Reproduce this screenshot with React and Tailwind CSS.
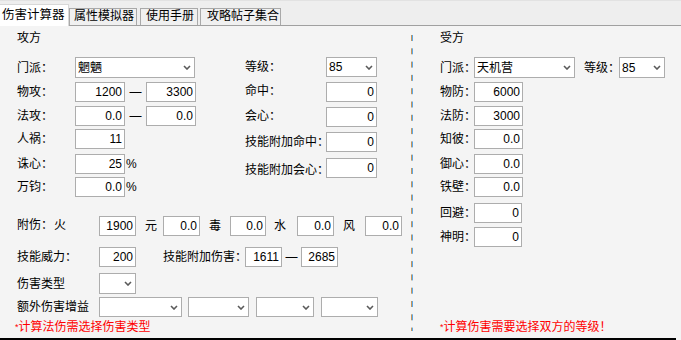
import React from "react"

const Chevron = () => (
  <svg width="8" height="5" viewBox="0 0 8 5" className="shrink-0">
    <path d="M1 1 L4 4 L7 1" fill="none" stroke="#5a5a5a" strokeWidth="1.6" />
  </svg>
)

function Box({ w, value = "", className = "" }) {
  return (
    <div
      className={`h-[20px] shrink-0 bg-white border border-[#adadad] flex items-center justify-end pr-[2px] leading-none ${w} ${className}`}
    >
      {value}
    </div>
  )
}

function Pick({ w, value = "", h = "h-[21px]", className = "" }) {
  return (
    <div
      className={`${h} shrink-0 bg-white border border-[#adadad] flex items-center pl-[2px] pr-[3px] leading-none ${w} ${className}`}
    >
      <span className="whitespace-nowrap">{value}</span>
      <span className="ml-auto">
        <Chevron />
      </span>
    </div>
  )
}

function Label({ w, children, className = "" }) {
  return <span className={`${w} shrink-0 whitespace-nowrap leading-none ${className}`}>{children}</span>
}

function Row({ className = "", children }) {
  return <div className={`flex items-center ${className}`}>{children}</div>
}

export default function App() {
  return (
    <div className="w-[681px] h-[340px] flex flex-col bg-[#f4f4f4] text-black text-[12px] font-['Liberation_Sans','Noto_Sans_CJK_SC',sans-serif] overflow-hidden">
      {/* tab strip */}
      <div className="h-[26px] shrink-0 bg-[#eeeeee] border-t border-t-[#e2e2e2] border-b border-[#a0a0a0] flex items-end">
        <div className="relative z-10 -mb-px h-[22px] w-[69px] bg-white border-r border-t border-[#d8d8d8] pl-[2px] pt-[3px] leading-[14px] text-[12.5px] whitespace-nowrap">
          伤害计算器
        </div>
        <div className="h-[17px] w-[68px] bg-[#f0f0f0] border-t border-l border-r border-[#a9a9a9] pl-[4px] leading-[15px] whitespace-nowrap">
          属性模拟器
        </div>
        <div className="ml-[3px] h-[17px] w-[58px] bg-[#f0f0f0] border-t border-l border-r border-[#a9a9a9] pl-[5px] leading-[15px] whitespace-nowrap">
          使用手册
        </div>
        <div className="ml-[2px] h-[17px] w-[81px] bg-[#f0f0f0] border-t border-l border-r border-[#a9a9a9] pl-[6px] leading-[15px] whitespace-nowrap">
          攻略帖子集合
        </div>
      </div>

      <div className="flex h-[312px]">
        {/* 攻方 */}
        <div className="w-[411px] shrink-0 pl-[17px] flex flex-col">
          <div className="mt-[5px] h-[14px] leading-[14px]">攻方</div>
          <div className="mt-[12px] flex">
            <div className="w-[228px] shrink-0 flex flex-col">
              <Row>
                <Label w="w-[58px]">门派：</Label>
                <Pick w="w-[120px]" value="魍魉" />
              </Row>
              <Row className="mt-[4px]">
                <Label w="w-[58px]">物攻：</Label>
                <Box w="w-[50px]" value="1200" />
                <span className="w-[21px] text-center">—</span>
                <Box w="w-[50px]" value="3300" />
              </Row>
              <Row className="mt-[4px]">
                <Label w="w-[58px]">法攻：</Label>
                <Box w="w-[50px]" value="0.0" />
                <span className="w-[21px] text-center">—</span>
                <Box w="w-[50px]" value="0.0" />
              </Row>
              <Row className="mt-[3px]">
                <Label w="w-[58px]">人祸：</Label>
                <Box w="w-[50px]" value="11" />
              </Row>
              <Row className="mt-[5px]">
                <Label w="w-[58px]">诛心：</Label>
                <Box w="w-[50px]" value="25" />
                <span className="pl-[1px]">%</span>
              </Row>
              <Row className="mt-[3px]">
                <Label w="w-[58px]">万钧：</Label>
                <Box w="w-[50px]" value="0.0" />
                <span className="pl-[1px]">%</span>
              </Row>
            </div>
            <div className="flex flex-col">
              <Row>
                <Label w="w-[81px]">等级：</Label>
                <Pick w="w-[51px]" h="h-[20px]" value="85" />
              </Row>
              <Row className="mt-[5px]">
                <Label w="w-[81px]" className="-mt-[3px]">命中：</Label>
                <Box w="w-[51px]" value="0" />
              </Row>
              <Row className="mt-[5px]">
                <Label w="w-[81px]" className="-mt-[3px]">会心：</Label>
                <Box w="w-[51px]" value="0" />
              </Row>
              <Row className="mt-[5px]">
                <Label w="w-[81px]">技能附加命中：</Label>
                <Box w="w-[51px]" value="0" />
              </Row>
              <Row className="mt-[6px]">
                <Label w="w-[81px]" className="mt-[4px]">技能附加会心：</Label>
                <Box w="w-[51px]" value="0" />
              </Row>
            </div>
          </div>

          <Row className="mt-[19px]">
            <span className="w-[82px] shrink-0 whitespace-nowrap leading-none -mt-[3px]">
              附伤：<span className="pl-[1px]">火</span>
            </span>
            <Box w="w-[37px]" value="1900" />
            <span className="w-[27px] shrink-0 pl-[9px]">元</span>
            <Box w="w-[37px]" value="0.0" />
            <span className="w-[30px] shrink-0 pl-[9px]">毒</span>
            <Box w="w-[36px]" value="0.0" />
            <span className="w-[31px] shrink-0 pl-[8px]">水</span>
            <Box w="w-[37px]" value="0.0" />
            <span className="w-[31px] shrink-0 pl-[9px]">风</span>
            <Box w="w-[37px]" value="0.0" />
          </Row>
          <Row className="mt-[11px]">
            <Label w="w-[82px]">技能威力：</Label>
            <Box w="w-[37px]" value="200" />
            <span className="w-[27px] shrink-0" />
            <Label w="w-[82px]">技能附加伤害：</Label>
            <Box w="w-[37px]" value="1611" />
            <span className="w-[19px] shrink-0 text-center">—</span>
            <Box w="w-[37px]" value="2685" />
          </Row>
          <Row className="mt-[6px]">
            <Label w="w-[82px]">伤害类型</Label>
            <Pick w="w-[37px]" />
          </Row>
          <Row className="mt-[3px]">
            <Label w="w-[82px]">额外伤害增益</Label>
            <Pick w="w-[83px]" h="h-[20px]" />
            <Pick w="w-[61px]" h="h-[20px]" className="ml-[6px]" />
            <Pick w="w-[58px]" h="h-[20px]" className="ml-[7px]" />
            <Pick w="w-[57px]" h="h-[20px]" className="ml-[7px]" />
          </Row>
          <div className="mt-[2px] -ml-[2px] h-[16px] leading-[16px] text-[#ff0000] whitespace-nowrap">
            <span className="text-[9px] align-top">*</span>计算法伤需选择伤害类型
          </div>
        </div>

        {/* separator */}
        <svg width="2" height="296" className="mt-[9px] shrink-0">
          <line x1="0.5" y1="0" x2="0.5" y2="296" stroke="#c8955a" strokeWidth="1" strokeDasharray="6 7.3" />
          <line x1="1.5" y1="0" x2="1.5" y2="296" stroke="#5aa8e8" strokeWidth="1" strokeDasharray="6 7.3" />
        </svg>

        {/* 受方 */}
        <div className="flex-1 pl-[27px] flex flex-col">
          <div className="mt-[5px] h-[14px] leading-[14px]">受方</div>
          <Row className="mt-[12px]">
            <Label w="w-[34px]">门派：</Label>
            <Pick w="w-[101px]" value="天机营" />
            <Label w="w-[35px]" className="ml-[9px]">等级：</Label>
            <Pick w="w-[46px]" value="85" />
          </Row>
          <Row className="mt-[4px]">
            <Label w="w-[34px]">物防：</Label>
            <Box w="w-[49px]" value="6000" />
          </Row>
          <Row className="mt-[4px]">
            <Label w="w-[34px]">法防：</Label>
            <Box w="w-[49px]" value="3000" />
          </Row>
          <Row className="mt-[3px]">
            <Label w="w-[34px]">知彼：</Label>
            <Box w="w-[49px]" value="0.0" />
          </Row>
          <Row className="mt-[5px]">
            <Label w="w-[34px]">御心：</Label>
            <Box w="w-[49px]" value="0.0" />
          </Row>
          <Row className="mt-[3px]">
            <Label w="w-[34px]">铁壁：</Label>
            <Box w="w-[49px]" value="0.0" />
          </Row>
          <Row className="mt-[6px]">
            <Label w="w-[34px]">回避：</Label>
            <Box w="w-[48px]" value="0" />
          </Row>
          <Row className="mt-[4px]">
            <Label w="w-[34px]">神明：</Label>
            <Box w="w-[48px]" value="0" />
          </Row>
          <div className="mt-auto mb-[3px] h-[16px] leading-[16px] text-[#ff0000] whitespace-nowrap">
            <span className="text-[9px] align-top">*</span>计算伤害需要选择双方的等级！
          </div>
        </div>
      </div>

      <div className="h-[2px] w-[676px] shrink-0 bg-black" />
    </div>
  )
}
